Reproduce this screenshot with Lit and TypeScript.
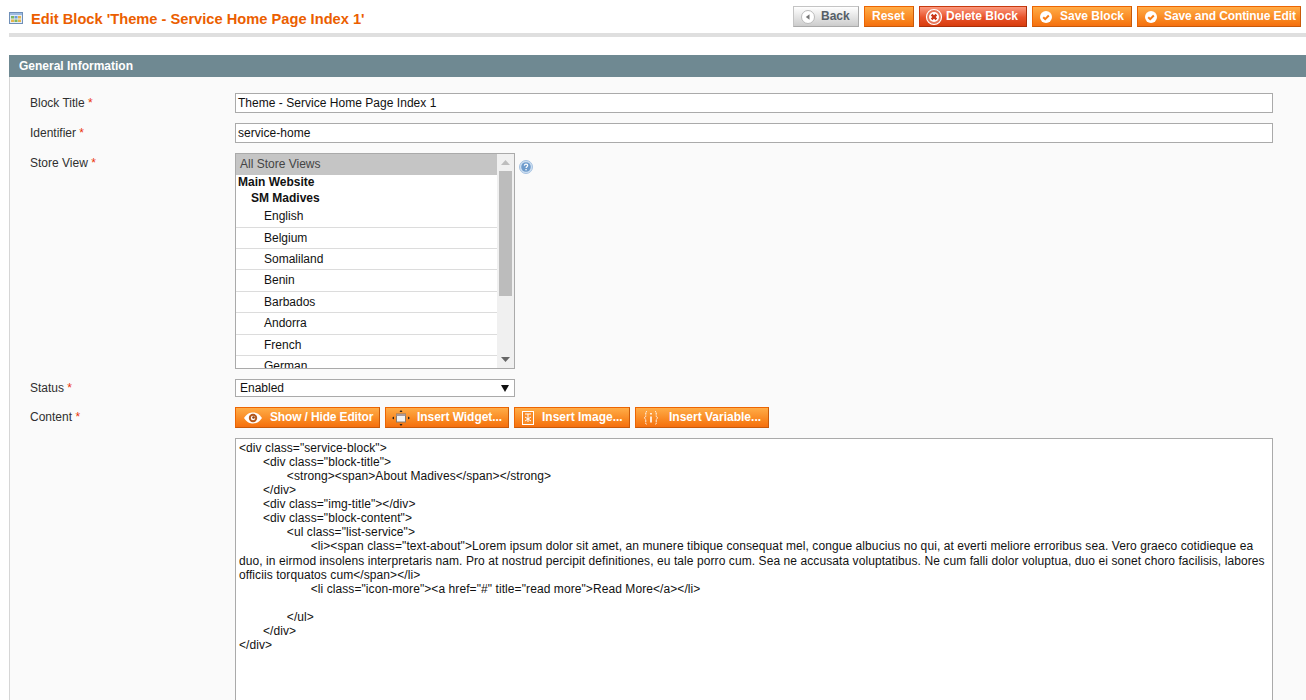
import { LitElement, html, css } from "lit";
import { customElement } from "lit/decorators.js";

const check = html`<svg class="ic" width="16" height="16" viewBox="0 0 16 16"><circle cx="8" cy="8" r="6" fill="#fff"/><path d="M5.200 8.200l2 2L10.800 6.500" fill="none" stroke="#f77c16" stroke-width="2"/></svg>`;
const back = html`<svg class="ic" width="16" height="16" viewBox="0 0 16 16"><circle cx="8" cy="8" r="6.500" fill="#fff" stroke="#bbb"/><path d="M9.500 5.200v5.600L5.800 8z" fill="#777"/></svg>`;
const del = html`<svg class="ic" width="18" height="18" viewBox="0 0 18 18"><circle cx="9" cy="9" r="7.500" fill="#e6775a" stroke="#fff" stroke-width="1.200"/><circle cx="9" cy="9" r="5" fill="#fff"/><path d="M6.600 6.600l4.800 4.800M11.400 6.600l-4.800 4.800" stroke="#c93516" stroke-width="2.200"/></svg>`;
const eye = html`<svg class="ic" width="20" height="14" viewBox="0 0 20 14"><path d="M1 7c3-4.500 6-5.500 9-5.500s6 1 9 5.500c-3 4.500-6 5.500-9 5.500S4 11.500 1 7z" fill="#fff"/><circle cx="10" cy="7" r="4.200" fill="#b4591c"/><circle cx="10" cy="7" r="2.200" fill="#fff"/><circle cx="10.500" cy="6.500" r="1.300" fill="#8a3f10"/></svg>`;
const widget = html`<svg class="ic" width="18" height="16" viewBox="0 0 18 16"><rect x="4.500" y="4" width="9" height="8" fill="#f3f3f3" stroke="#8a7a6a"/><rect x="4.500" y="4" width="9" height="2" fill="#a99"/><path d="M9 0l-1.500 2h3zM9 16l-1.500-2h3zM0 8l2-1.500v3zM18 8l-2-1.500v3z" fill="#222"/></svg>`;
const image = html`<svg class="ic" width="12" height="14" viewBox="0 0 12 14"><rect x=".5" y=".5" width="11" height="13" fill="#f98a26" stroke="#fff"/><path d="M3 3h6M6 3v8M3 6l3 2 3-2M3 10l3-2 3 2" stroke="#fff" stroke-width="1" fill="none"/></svg>`;
const vari = html`<svg class="ic" width="16" height="16" viewBox="0 0 16 16"><path d="M4 1.500C2.500 1.500 2.800 3 2.800 5S2.500 7.500 1 8c1.500.5 1.800 1 1.800 3s-.3 3.500 1.200 3.500M12 1.500c1.500 0 1.200 1.500 1.200 3.500s.3 2.500 1.800 3c-1.500.5-1.800 1-1.800 3s.3 3.500-1.200 3.500" fill="none" stroke="#fff" stroke-dasharray="1.500 .7"/><path d="M8 3v1.500M8 6.500v6" stroke="#fff" stroke-width="1.600"/></svg>`;

const headerBtns = [
  { label: "Back", icon: back, cls: "back", w: 66, pad: 6, g: 5, ls: 0 },
  { label: "Reset", icon: null, cls: "", w: 50, pad: 7, g: 0, ls: 0 },
  { label: "Delete Block", icon: del, cls: "del", w: 108, pad: 5, g: 3, ls: 0 },
  { label: "Save Block", icon: check, cls: "", w: 100, pad: 5, g: 6, ls: 0 },
  { label: "Save and Continue Edit", icon: check, cls: "", w: 164, pad: 5, g: 5, ls: -0.1 },
];
const editorBtns = [
  { label: "Show / Hide Editor", icon: eye, w: 145, pad: 7, g: 7, ls: -0.15 },
  { label: "Insert Widget...", icon: widget, w: 124, pad: 6, g: 7, ls: -0.05 },
  { label: "Insert Image...", icon: image, w: 116, pad: 7, g: 8, ls: 0 },
  { label: "Insert Variable...", icon: vari, w: 134, pad: 7, g: 10, ls: 0 },
];
const stores = ["English", "Belgium", "Somaliland", "Benin", "Barbados", "Andorra", "French", "German"];
const source = `<div class="service-block">
\t<div class="block-title">
\t\t<strong><span>About Madives</span></strong>
\t</div>
\t<div class="img-title"></div>
\t<div class="block-content">
\t\t<ul class="list-service">
\t\t\t<li><span class="text-about">Lorem ipsum dolor sit amet, an munere tibique consequat mel, congue albucius no qui, at everti meliore erroribus sea. Vero graeco cotidieque ea duo, in eirmod insolens interpretaris nam. Pro at nostrud percipit definitiones, eu tale porro cum. Sea ne accusata voluptatibus. Ne cum falli dolor voluptua, duo ei sonet choro facilisis, labores officiis torquatos cum</span></li>
\t\t\t<li class="icon-more"><a href="#" title="read more">Read More</a></li>

\t\t</ul>
\t</div>
</div>`;

@customElement("app-root")
export class AppRoot extends LitElement {
  static styles = css`
    :host { display: block; height: 700px; overflow: hidden; background: #fff; font: 12px/15px "Liberation Sans", Arial, sans-serif; color: #2f2f2f; }
    .page { padding-left: 9px; }
    .head { height: 33px; border-bottom: 4px solid #dfdfdf; display: flex; align-items: flex-start; }
    .title { display: flex; align-items: center; gap: 8px; margin-top: 10px; flex: 1; font-size: 14.67px; font-weight: bold; line-height: 19px; color: #eb5e00; }
    .title svg { flex: none; margin-top: -3px; }
    .actions { display: flex; gap: 5px; margin-top: 6px; padding-right: 5px; }
    .btn { box-sizing: border-box; height: 21px; display: flex; align-items: center; flex: none; border: 1px solid #ed6502; border-color: #ed6502 #c85a0a #c85a0a #ed6502; background: linear-gradient(#ffac47, #f77c16 80%, #f56f10); color: #fff; font-weight: bold; font-size: 12px; line-height: 15px; white-space: nowrap; }
    .btn.back { background: linear-gradient(#fff, #ccc); border-color: #c4c4c4 #aaa #aaa #c4c4c4; color: #555e66; }
    .btn.del { background: linear-gradient(#fb9a7e, #e8522a 55%, #d83c0c); border-color: #c8390f #a92e0a #a92e0a #c8390f; }
    .ic { flex: none; display: block; }
    .section { margin-top: 18px; }
    .sec-head { height: 22px; background: #6f8992; color: #fff; font-weight: bold; line-height: 23px; padding-left: 10px; }
    .panel { background: #fafafa; border-left: 1px solid #d6d6d6; padding: 16px 33px 0 20px; }
    .row { display: flex; margin-bottom: 10px; }
    .lbl { width: 205px; flex: none; line-height: 20px; }
    .lbl.tight { line-height: 18px; }
    .lbl em { font-style: normal; color: #eb340a; }
    .field { flex: 1; min-width: 0; }
    .input { box-sizing: border-box; height: 20px; border: 1px solid #aaa; background: #fff; padding-left: 2px; line-height: 18px; color: #111; letter-spacing: 0.03px; }
    .store-row { align-items: flex-start; }
    .store-field { display: flex; flex: 1; align-items: flex-start; }
    .list { box-sizing: border-box; width: 280px; height: 216px; border: 1px solid #aaa; background: #fff; display: flex; overflow: hidden; color: #111; flex: none; }
    .opts { flex: 1; min-width: 0; }
    .opt-all { height: 21px; background: #c5c5c5; color: #444; padding-left: 4px; line-height: 21px; }
    .opt-g { height: 16px; line-height: 15px; font-weight: bold; padding-left: 2px; }
    .opt-g.g2 { padding-left: 15px; height: 15.200px; }
    .opt { box-sizing: border-box; height: 21.430px; padding-left: 28px; border-bottom: 1px solid #dcdcdc; line-height: 20px; }
    .scroll { width: 17px; flex: none; background: #f0f0f0; display: flex; flex-direction: column; align-items: center; }
    .arrow { height: 17px; display: flex; align-items: center; justify-content: center; flex: none; }
    .thumb { width: 13px; height: 125px; background: #bcbcbc; }
    .spacer { flex: 1; }
    .help { margin: 7px 0 0 4px; flex: none; }
    .select { box-sizing: border-box; width: 280px; height: 18px; border: 1px solid #aaa; background: #fff; display: flex; align-items: center; justify-content: space-between; padding: 0 5px 0 4px; color: #111; }
    .editor-btns { display: flex; gap: 5px; margin-bottom: 10px; }
    .textarea { box-sizing: border-box; height: 300px; border: 1px solid #aaa; background: #fff; padding: 2px 3px; color: #111; white-space: pre-wrap; tab-size: 23.900px; line-height: 14.070px; overflow: hidden; letter-spacing: 0.08px; }
  `;

  render() {
    return html`<div class="page">
      <div class="head">
        <div class="title">
          <svg width="14" height="12" viewBox="0 0 14 12"><rect x=".5" y=".5" width="13" height="11" fill="#e4edf7" stroke="#6f8fb8"/><rect x="1" y="1" width="12" height="2" fill="#9dbbe0"/><rect x="2" y="4" width="3" height="2.500" fill="#7fb55e"/><rect x="5.500" y="4" width="3" height="2.500" fill="#6c9bd6"/><rect x="9" y="4" width="3" height="2.500" fill="#e6b54c"/><rect x="2" y="7.500" width="3" height="2.500" fill="#e6b54c"/><rect x="5.500" y="7.500" width="3" height="2.500" fill="#7fb55e"/><rect x="9" y="7.500" width="3" height="2.500" fill="#e6b54c"/></svg>
          <span>Edit Block 'Theme - Service Home Page Index 1'</span>
        </div>
        <div class="actions">
          ${headerBtns.map(b => html`<div class="btn ${b.cls}" style="width:${b.w}px;gap:${b.g}px;padding-left:${b.pad}px;letter-spacing:${b.ls}px">${b.icon}<span>${b.label}</span></div>`)}
        </div>
      </div>
      <div class="section">
        <div class="sec-head">General Information</div>
        <div class="panel">
          <div class="row"><div class="lbl">Block Title <em>*</em></div><div class="field"><div class="input">Theme - Service Home Page Index 1</div></div></div>
          <div class="row"><div class="lbl">Identifier <em>*</em></div><div class="field"><div class="input">service-home</div></div></div>
          <div class="row store-row">
            <div class="lbl">Store View <em>*</em></div>
            <div class="store-field">
              <div class="list">
                <div class="opts">
                  <div class="opt-all">All Store Views</div>
                  <div class="opt-g">Main Website</div>
                  <div class="opt-g g2">SM Madives</div>
                  ${stores.map(s => html`<div class="opt">${s}</div>`)}
                </div>
                <div class="scroll">
                  <div class="arrow"><svg width="9" height="5" viewBox="0 0 9 5"><path d="M4.500 0L9 5H0z" fill="#bdbdbd"/></svg></div>
                  <div class="thumb"></div>
                  <div class="spacer"></div>
                  <div class="arrow"><svg width="9" height="5" viewBox="0 0 9 5"><path d="M4.500 5L9 0H0z" fill="#666"/></svg></div>
                </div>
              </div>
              <svg class="help" width="14" height="14" viewBox="0 0 14 14"><circle cx="7" cy="7" r="6.500" fill="#cfe0f2" stroke="#a6c2e0"/><circle cx="7" cy="7" r="4.800" fill="#6f9ccc"/><path d="M5.300 5.600c.2-1 .9-1.400 1.700-1.400 1 0 1.700.6 1.700 1.400 0 1.200-1.600 1.200-1.600 2.500" fill="none" stroke="#fff" stroke-width="1.200"/><rect x="6.400" y="9" width="1.300" height="1.300" fill="#fff"/></svg>
            </div>
          </div>
          <div class="row"><div class="lbl tight">Status <em>*</em></div><div class="field"><div class="select"><span>Enabled</span><svg width="8" height="7" viewBox="0 0 8 7"><path d="M0 0h8L4 7z" fill="#111"/></svg></div></div></div>
          <div class="row">
            <div class="lbl">Content <em>*</em></div>
            <div class="field">
              <div class="editor-btns">
                ${editorBtns.map(b => html`<div class="btn" style="width:${b.w}px;gap:${b.g}px;padding-left:${b.pad}px;letter-spacing:${b.ls}px">${b.icon}<span>${b.label}</span></div>`)}
              </div>
              <div class="textarea">${source}</div>
            </div>
          </div>
        </div>
      </div>
    </div>`;
  }
}
